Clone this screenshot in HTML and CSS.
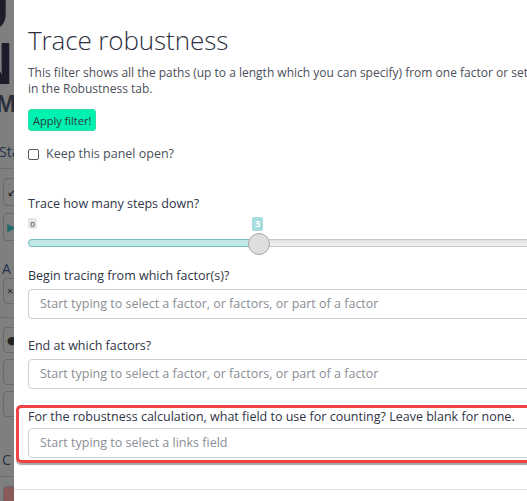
FILE: index.html
```html
<!DOCTYPE html>
<html>
<head>
<meta charset="utf-8">
<link rel="stylesheet" href="styles.css">
</head>
<body>
<div class="screen">
  <div class="backdrop">
    <div class="bg-big bg-u">U</div>
    <div class="bg-big bg-n">N</div>
    <div class="bg-mid">M</div>
    <div class="bg-small">Sta</div>
    <div class="bg-rule"></div>
    <div class="bg-box">↙</div>
    <div class="bg-box bg-play">▶</div>
    <div class="bg-small bg-a">A</div>
    <div class="bg-box bg-short">×</div>
    <div class="bg-rule"></div>
    <div class="bg-box bg-short">●</div>
    <div class="bg-box bg-short"></div>
    <div class="bg-box bg-short"></div>
    <div class="bg-small bg-c">C</div>
    <div class="bg-rule"></div>
    <div class="bg-box bg-red"></div>
  </div>
  <div class="modal">
    <h1 class="title">Trace robustness</h1>
    <p class="intro">This filter shows all the paths (up to a length which you can specify) from one factor or set<br>in the Robustness tab.</p>
    <button class="apply">Apply filter!</button>
    <label class="keep"><span class="box"></span>Keep this panel open?</label>

    <div class="field-label steps">Trace how many steps down?</div>
    <div class="slider">
      <div class="slider-labels">
        <span class="min-label">0</span>
        <span class="val-label">3</span>
      </div>
      <div class="track">
        <div class="fill"></div>
        <div class="thumb"></div>
      </div>
    </div>

    <div class="field-label begin">Begin tracing from which factor(s)?</div>
    <div class="input">Start typing to select a factor, or factors, or part of a factor</div>

    <div class="field-label end">End at which factors?</div>
    <div class="input">Start typing to select a factor, or factors, or part of a factor</div>

    <div class="highlight">
      <div class="field-label count">For the robustness calculation, what field to use for counting? Leave blank for none.</div>
      <div class="input">Start typing to select a links field</div>
    </div>

    <div class="footer-rule"></div>
  </div>
</div>
</body>
</html>
```

FILE: styles.css
```css
html, body {
  margin: 0;
  padding: 0;
  width: 527px;
  height: 501px;
  overflow: hidden;
  background: #ffffff;
}

.screen {
  display: flex;
  width: 527px;
  height: 501px;
  overflow: hidden;
  font-family: "Open Sans", "DejaVu Sans", sans-serif;
}

/* dimmed page behind the modal */
.backdrop {
  flex: 0 0 14px;
  width: 14px;
  height: 501px;
  background: #7f7f7f;
  overflow: hidden;
  display: flex;
  flex-direction: column;
}

.bg-big {
  flex: none;
  font-family: "Liberation Sans", sans-serif;
  font-weight: bold;
  font-size: 60px;
  color: #1c1c2a;
  margin-left: -34px;
  overflow: hidden;
}
.bg-u { margin-top: -15px; height: 50px; line-height: 50px; }
.bg-n { height: 57px; line-height: 57px; margin-left: -30px; }

.bg-mid {
  flex: none;
  font-family: "Liberation Sans", sans-serif;
  font-weight: bold;
  font-size: 24px;
  line-height: 24px;
  height: 24px;
  color: #2a2f3a;
  margin-left: -4px;
}

.bg-small {
  flex: none;
  font-size: 14px;
  line-height: 18px;
  height: 18px;
  color: #23304a;
  margin-top: 27px;
  margin-left: -1px;
}
.bg-a { margin-top: 12px; margin-left: 2px; }
.bg-c { margin-top: 28px; margin-left: 2px; }

.bg-rule {
  flex: none;
  height: 1px;
  background: #6e6e6e;
  margin-top: 7px;
  margin-bottom: 9px;
}

.bg-box {
  flex: none;
  height: 28px;
  margin-left: 3px;
  margin-bottom: 7px;
  width: 20px;
  border: 1px solid #6a6a6a;
  border-radius: 4px;
  color: #222;
  font-size: 11px;
  line-height: 26px;
  padding-left: 3px;
  box-sizing: border-box;
}
.bg-play { color: #1f6a6a; }
.bg-short { height: 26px; margin-bottom: 6px; line-height: 24px; }
.bg-red { background: #8a5a5a; border-color: #6a6a6a; }

/* modal */
.modal {
  flex: 0 0 560px;
  width: 560px;
  height: 501px;
  background: #ffffff;
  padding-left: 14px;
  box-sizing: border-box;
  color: #343a48;
}

.title {
  margin: 24px 0 0 0;
  font-size: 26px;
  line-height: 32px;
  font-weight: 300;
  color: #2c3040;
  letter-spacing: -0.1px;
}

.intro {
  margin: 9px 0 0 0;
  font-size: 12px;
  line-height: 16px;
  color: #4a4f5a;
  white-space: nowrap;
}

.apply {
  display: block;
  margin-top: 12px;
  height: 22px;
  padding: 0 4px;
  background: #00f2b0;
  border: 1px solid #38d8a8;
  border-radius: 3px;
  font-family: inherit;
  font-size: 11px;
  color: #2c3a3a;
}

.keep {
  display: flex;
  align-items: center;
  margin-top: 15px;
  font-size: 12.5px;
  line-height: 16px;
  color: #4a4f5a;
}
.keep .box {
  width: 11px;
  height: 11px;
  border: 1px solid #555;
  border-radius: 2px;
  margin-right: 7px;
  box-sizing: border-box;
}

.field-label {
  font-size: 12.5px;
  line-height: 16px;
  color: #2f3446;
}
.steps { margin-top: 34px; }

.slider {
  width: 530px;
}
.slider-labels {
  position: relative;
  height: 21px;
  margin-top: 6px;
}
.min-label {
  position: absolute;
  left: 0;
  top: 0;
  width: 9px;
  height: 11px;
  background: #e6e6e6;
  border-radius: 2px;
  font-size: 8px;
  line-height: 11px;
  text-align: center;
  color: #333;
}
.val-label {
  position: absolute;
  left: 224px;
  top: -1px;
  width: 11px;
  height: 14px;
  background: #a6dcdf;
  border-radius: 2px;
  font-size: 9px;
  font-weight: bold;
  line-height: 14px;
  text-align: center;
  color: #ffffff;
}
.track {
  position: relative;
  height: 6px;
  background: linear-gradient(#e2e2e2, #f2f2f2);
  border: 1px solid #c8c8c8;
  border-radius: 4px;
}
.fill {
  width: 230px;
  height: 6px;
  background: #c3e6e8;
  border: 1px solid #74c2c6;
  border-radius: 4px;
  margin: -1px 0 0 -1px;
}
.thumb {
  position: absolute;
  left: 219px;
  top: -7px;
  width: 20px;
  height: 20px;
  border-radius: 50%;
  background: #dedede;
  border: 1px solid #a8a8a8;
}

.begin { margin-top: 21px; }
.end { margin-top: 19px; }

.input {
  margin-top: 5px;
  height: 30px;
  border: 1px solid #cfcfcf;
  border-radius: 4px;
  box-sizing: border-box;
  padding-left: 11px;
  font-size: 12.5px;
  line-height: 28px;
  color: #8a8e96;
  width: 540px;
}

.highlight {
  margin-top: 16px;
  margin-left: -12px;
  padding: 1px 0 2px 9px;
  border: 3px solid #ee4444;
  border-right: none;
  border-radius: 5px 0 0 5px;
  box-shadow: 0 2px 1px rgba(0,0,0,0.35);
}
.highlight .input { margin-top: 3px; }
.count { white-space: nowrap; }

.footer-rule {
  margin-top: 26px;
  margin-left: -14px;
  height: 1px;
  background: #e0e0e0;
}
```
